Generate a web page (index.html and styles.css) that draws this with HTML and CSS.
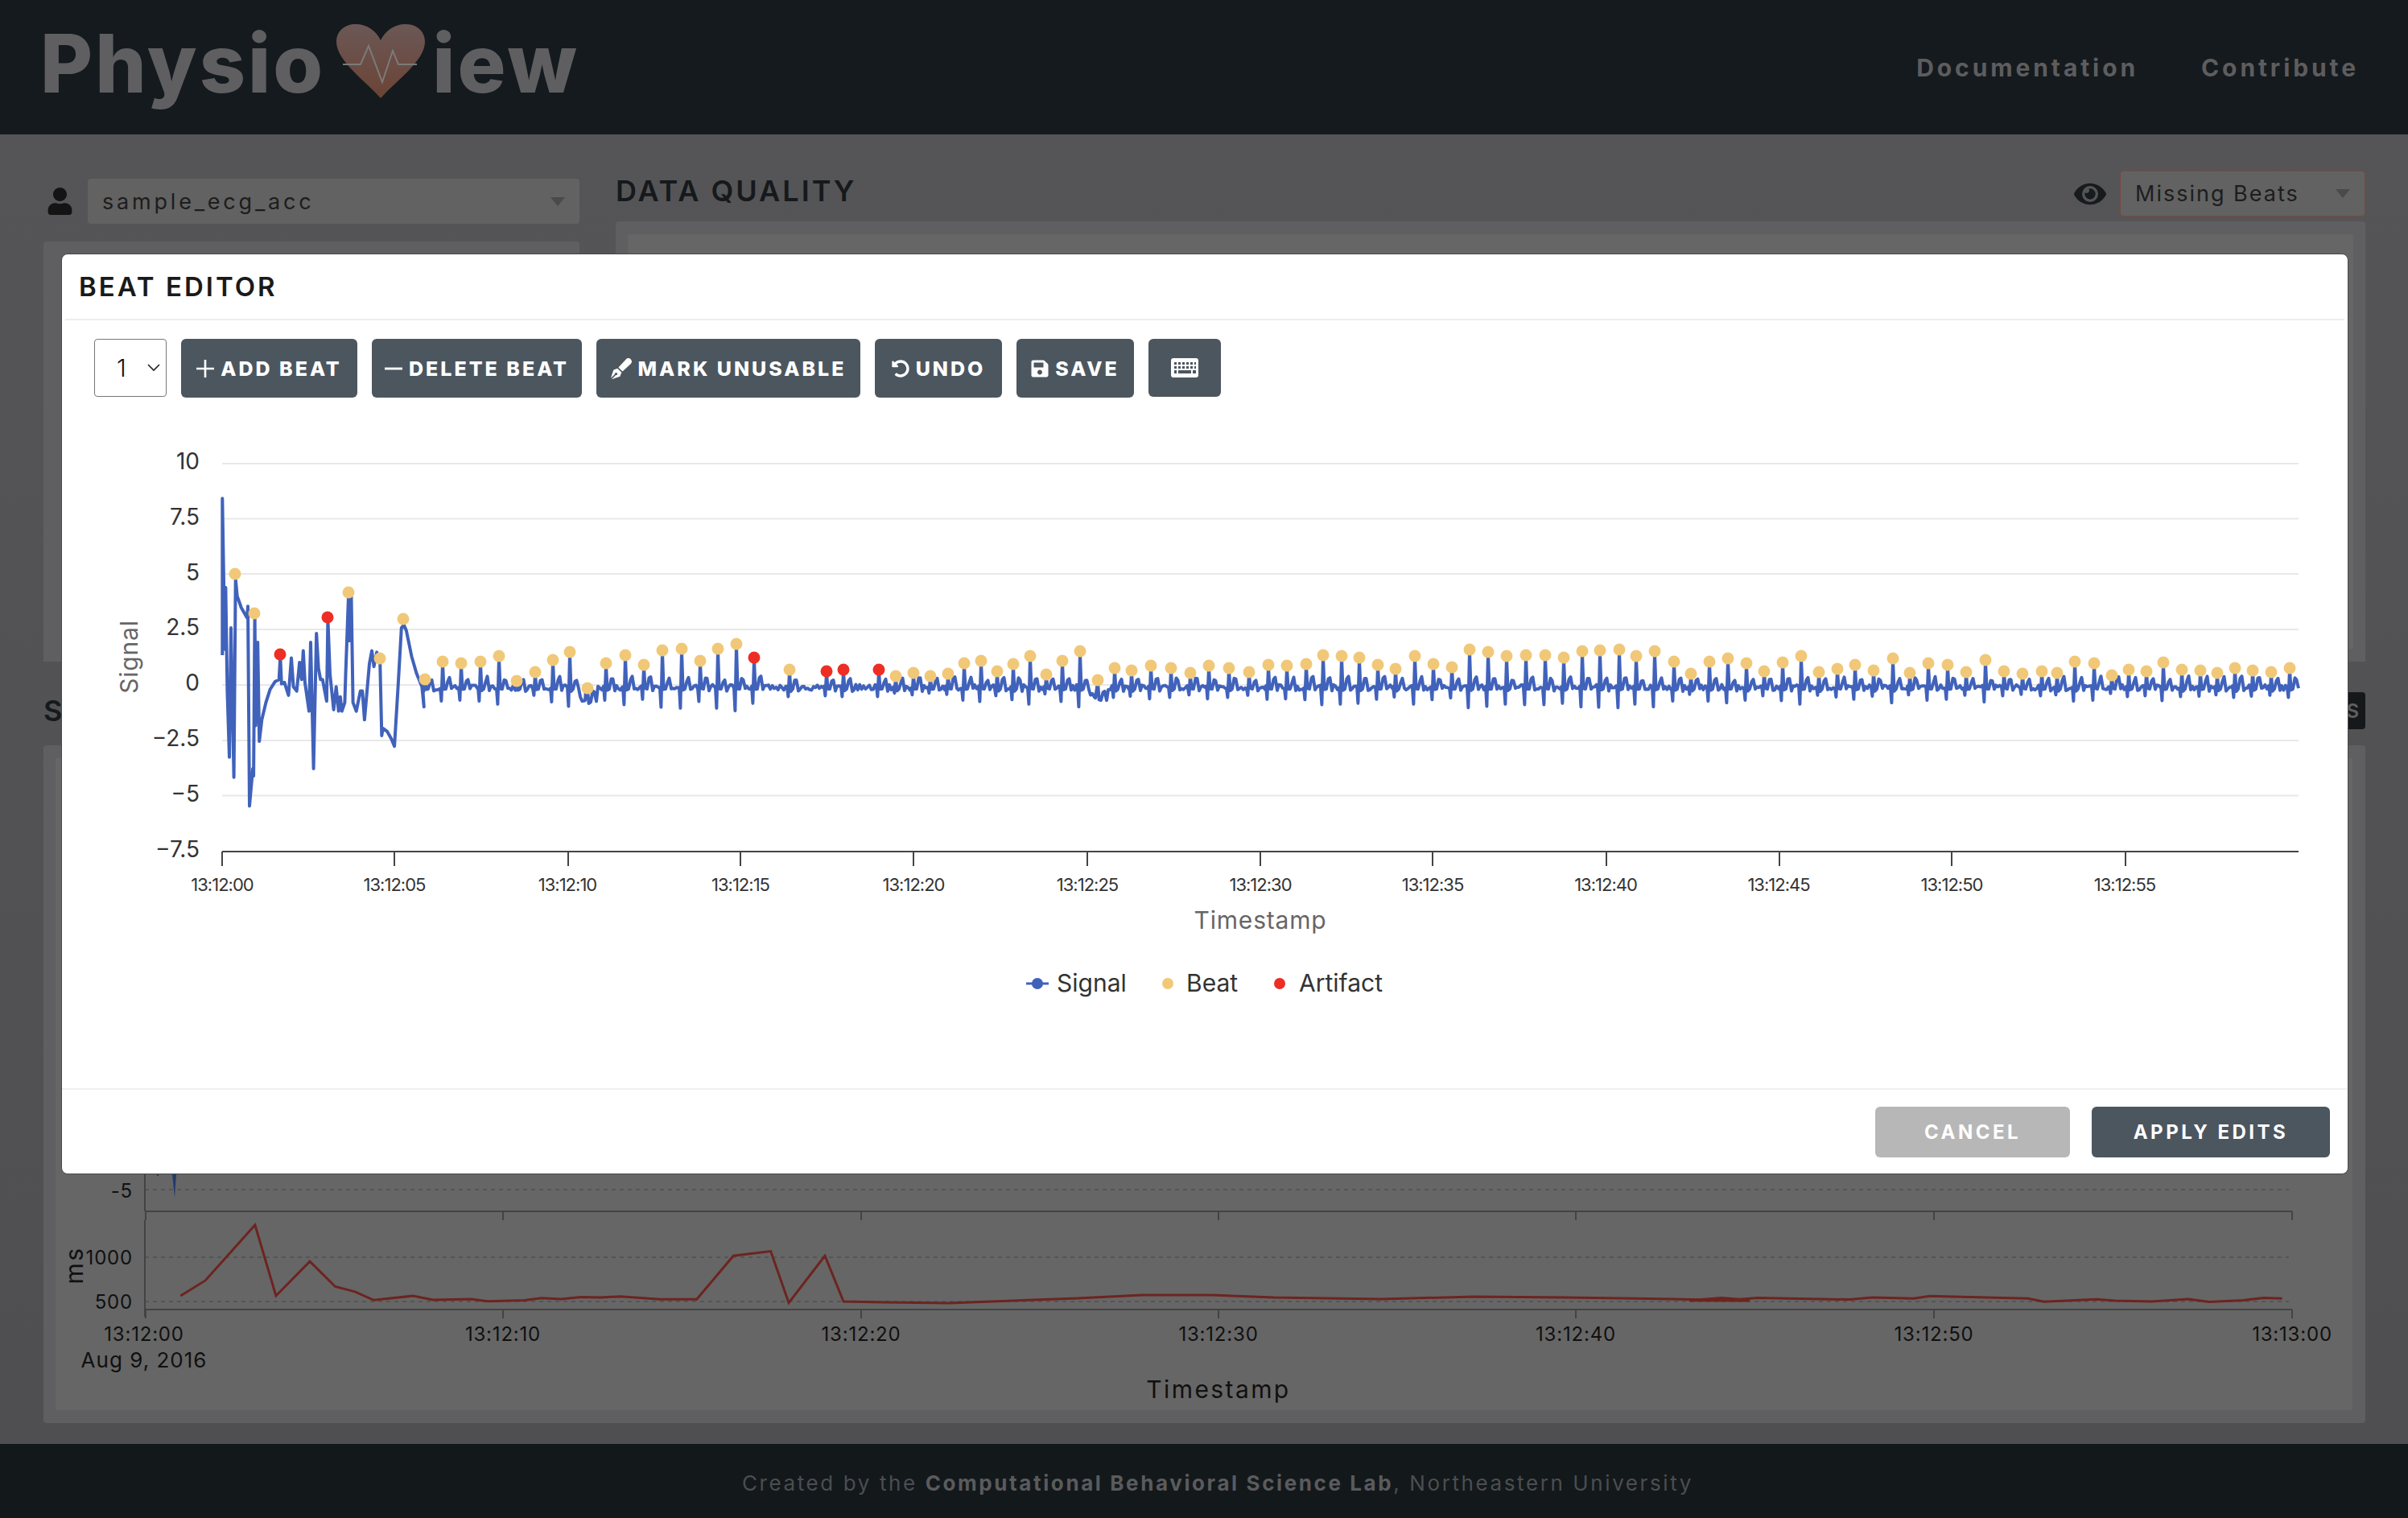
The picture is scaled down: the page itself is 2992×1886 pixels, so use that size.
FILE: index.html
```html
<!DOCTYPE html>
<html lang="en">
<head>
  <meta charset="UTF-8" />
  <title>PhysioView</title>
  <link rel="stylesheet" href="styles.css">
</head>
<body>
  <header class="topbar">
    <div class="logo">
      <span>Physio</span>
      <svg class="logo-heart" viewBox="0 0 110 92">
        <defs>
          <linearGradient id="heartFill" x1="0" y1="0" x2="0" y2="1">
            <stop offset="0" stop-color="#6b5856"/>
            <stop offset="1" stop-color="#6c4335"/>
          </linearGradient>
        </defs>
        <path d="M55 92C38 72 0 46 0 22 0 8 11 0 24 0c14 0 25 8 31 20C61 8 72 0 86 0c13 0 24 8 24 22 0 24-38 50-55 70z" fill="url(#heartFill)"/>
        <path d="M8 50h22l10-23 17 45 13-39 7 17h23" fill="none" stroke="#7b7b79" stroke-width="2"/>
      </svg>
      <span>iew</span>
    </div>
    <nav class="topnav">
      <a>Documentation</a>
      <a>Contribute</a>
    </nav>
  </header>

  <main class="content">
    <div class="top-row">
      <section class="side-col">
        <div class="subject-row">
          <svg class="user-icon" viewBox="0 0 448 512"><path d="M224 256c70.7 0 128-57.3 128-128S294.7 0 224 0 96 57.3 96 128s57.3 128 128 128zm89.6 32h-16.7c-22.2 10.2-46.9 16-72.9 16s-50.6-5.8-72.9-16h-16.7C60.2 288 0 348.2 0 422.4V464c0 26.5 21.5 48 48 48h352c26.5 0 48-21.5 48-48v-41.6c0-74.2-60.2-134.4-134.4-134.4z"/></svg>
          <div class="drop subject-drop">
            <span>sample_ecg_acc</span>
            <i class="drop-arrow"></i>
          </div>
        </div>
        <div class="card side-card"></div>
      </section>

      <section class="quality-col">
        <div class="quality-head">
          <h2 class="section-title">DATA QUALITY</h2>
          <svg class="eye-icon" viewBox="0 0 576 512"><path d="M572.52 241.4C518.29 135.59 410.93 64 288 64S57.68 135.64 3.48 241.41a32.35 32.35 0 0 0 0 29.19C57.71 376.41 165.07 448 288 448s230.32-71.64 284.52-177.41a32.35 32.35 0 0 0 0-29.19zM288 400a144 144 0 1 1 144-144 143.93 143.93 0 0 1-144 144zm0-240a95.31 95.31 0 0 0-25.31 3.79 47.85 47.85 0 0 1-66.9 66.9A95.78 95.78 0 1 0 288 160z"/></svg>
          <div class="drop metric-drop">
            <span>Missing Beats</span>
            <i class="drop-arrow"></i>
          </div>
        </div>
        <div class="card quality-card">
          <div class="card-inner"></div>
        </div>
      </section>
    </div>

    <div class="signal-head">
      <h2 class="section-title">SIGNAL</h2>
      <span class="dark-btn">BEATS</span>
    </div>

    <section class="card signal-card">
      <svg class="signal-plot" viewBox="70 942 2854 810">
        <path class="under-trace" d="M220 1459l-2 29-3-29z"/>
        <path class="under-tick" d="M197 1459v2"/>
        <g class="plot-grid">
          <path d="M181 1478H2845M181 1562H2845M181 1617H2845"/>
        </g>
        <g class="plot-axis">
          <path d="M181 1459V1505M181 1505H2849M181 1516V1636M181 1627H2849"/>
          <path d="M182 1505v11M626 1505v11M1071 1505v11M1515 1505v11M1959 1505v11M2404 1505v11M2849 1505v11"/>
          <path d="M182 1627v11M626 1627v11M1071 1627v11M1515 1627v11M1959 1627v11M2404 1627v11M2849 1627v11"/>
        </g>
        <polyline id="rrTrace" class="rr-trace" points=""/>
        <g class="plot-text">
          <text x="166" y="1488" text-anchor="end">-5</text>
          <text x="166" y="1571" text-anchor="end">1000</text>
          <text x="166" y="1626" text-anchor="end">500</text>
          <text x="180" y="1666" text-anchor="middle">13:12:00</text>
          <text x="626" y="1666" text-anchor="middle">13:12:10</text>
          <text x="1071" y="1666" text-anchor="middle">13:12:20</text>
          <text x="1515" y="1666" text-anchor="middle">13:12:30</text>
          <text x="1959" y="1666" text-anchor="middle">13:12:40</text>
          <text x="2404" y="1666" text-anchor="middle">13:12:50</text>
          <text x="2849" y="1666" text-anchor="middle">13:13:00</text>
          <text class="plot-date" x="180" y="1699" text-anchor="middle">Aug 9, 2016</text>
          <text class="plot-title" x="1515" y="1737" text-anchor="middle">Timestamp</text>
          <text class="plot-title" transform="translate(104 1572) rotate(-90)" text-anchor="middle">ms</text>
        </g>
      </svg>
    </section>
  </main>

  <footer class="bottombar">
    Created by the <b>Computational Behavioral Science Lab</b>, Northeastern University
  </footer>

  <div class="modal">
    <div class="modal-head">
      <h3>BEAT EDITOR</h3>
    </div>
    <div class="modal-body">
      <div class="toolbar">
        <div class="segment-select">
          <span>1</span>
          <svg viewBox="0 0 16 10"><path d="M1 1l7 7 7-7" fill="none" stroke="#222" stroke-width="1.6"/></svg>
        </div>
        <button class="btn btn-add">
          <svg viewBox="0 0 20 20"><path d="M10 0v20M0 10h20" stroke="#fff" stroke-width="2.4"/></svg>
          ADD BEAT
        </button>
        <button class="btn btn-delete">
          <svg viewBox="0 0 20 20"><path d="M0 10h20" stroke="#fff" stroke-width="2.6"/></svg>
          DELETE BEAT
        </button>
        <button class="btn btn-mark">
          <svg class="icon-pen" viewBox="0 0 512 512"><path fill="#fff" d="M79.18 282.94a32.005 32.005 0 0 0-20.24 20.24L0 480l4.69 4.69 92.89-92.89c-.66-2.56-1.57-5.03-1.57-7.8 0-17.67 14.33-32 32-32s32 14.33 32 32-14.33 32-32 32c-2.77 0-5.24-.91-7.8-1.57l-92.89 92.89L32 512l176.82-58.94a31.983 31.983 0 0 0 20.24-20.24l33.07-84.07-98.88-98.88-84.07 33.07zM369.25 28.32L186.14 227.81l97.85 97.85 199.49-183.11C568.4 67.48 443.73-55.94 369.25 28.32z"/></svg>
          MARK UNUSABLE
        </button>
        <button class="btn btn-undo">
          <svg viewBox="0 0 512 512"><path fill="#fff" d="M255.545 8c-66.269.119-126.438 26.233-170.86 68.685L48.971 40.971C33.851 25.851 8 36.559 8 57.941V192c0 13.255 10.745 24 24 24h134.059c21.382 0 32.09-25.851 16.971-40.971l-41.75-41.75c30.864-28.899 70.801-44.907 113.23-45.273 92.398-.798 170.283 73.977 169.484 169.442C423.236 348.009 349.816 424 256 424c-41.127 0-79.997-14.678-110.63-41.556-4.743-4.161-11.906-3.908-16.368.553L89.34 422.659c-4.872 4.872-4.631 12.815.482 17.433C133.798 479.813 192.074 504 256 504c136.966 0 247.999-111.033 248-247.998C504.001 119.193 392.354 7.755 255.545 8z"/></svg>
          UNDO
        </button>
        <button class="btn btn-save">
          <svg viewBox="0 0 448 512"><path fill="#fff" d="M433.941 129.941l-83.882-83.882A48 48 0 0 0 316.118 32H48C21.49 32 0 53.49 0 80v352c0 26.51 21.49 48 48 48h352c26.51 0 48-21.49 48-48V163.882a48 48 0 0 0-14.059-33.941zM224 416c-35.346 0-64-28.654-64-64 0-35.346 28.654-64 64-64s64 28.654 64 64c0 35.346-28.654 64-64 64zm96-304.52V212c0 6.627-5.373 12-12 12H76c-6.627 0-12-5.373-12-12V108c0-6.627 5.373-12 12-12h228.52c3.183 0 6.235 1.264 8.485 3.515l3.48 3.48A11.996 11.996 0 0 1 320 111.48z"/></svg>
          SAVE
        </button>
        <button class="btn btn-keys">
          <svg viewBox="0 0 34 24">
            <rect width="34" height="24" rx="3" fill="#fff"/>
            <path d="M4 5h3v3H4zM9 5h3v3H9zM14 5h3v3h-3zM19 5h3v3h-3zM24 5h3v3h-3zM29 5h2v3h-2zM4 10h3v3H4zM9 10h3v3H9zM14 10h3v3h-3zM19 10h3v3h-3zM24 10h3v3h-3zM29 10h2v3h-2zM4 15h3v4H4zM9 15h16v4H9zM27 15h4v4h-4z" fill="#4c565f"/>
          </svg>
        </button>
      </div>

      <svg class="beat-plot" viewBox="77 520 2840 760">
        <path class="grid" d="M276 576H2856M276 644.5H2856M276 713H2856M276 782H2856M276 851H2856M276 920H2856M276 988.5H2856"/>
        <path class="axis" d="M276 1058H2856M276 1058v18M490 1058v18M706 1058v18M920 1058v18M1135 1058v18M1351 1058v18M1566 1058v18M1780 1058v18M1996 1058v18M2211 1058v18M2425 1058v18M2641 1058v18"/>
        <polyline id="signalLine" class="signal-line" points=""/>
        <g id="beatDots"></g>
        <g class="y-labels" text-anchor="end">
          <text x="248" y="583">10</text>
          <text x="248" y="652">7.5</text>
          <text x="248" y="721">5</text>
          <text x="248" y="789">2.5</text>
          <text x="248" y="858">0</text>
          <text x="248" y="927">−2.5</text>
          <text x="248" y="996">−5</text>
          <text x="248" y="1065">−7.5</text>
        </g>
        <g class="x-labels" text-anchor="middle">
          <text x="276" y="1107">13:12:00</text>
          <text x="490" y="1107">13:12:05</text>
          <text x="705" y="1107">13:12:10</text>
          <text x="920" y="1107">13:12:15</text>
          <text x="1135" y="1107">13:12:20</text>
          <text x="1351" y="1107">13:12:25</text>
          <text x="1566" y="1107">13:12:30</text>
          <text x="1780" y="1107">13:12:35</text>
          <text x="1995" y="1107">13:12:40</text>
          <text x="2210" y="1107">13:12:45</text>
          <text x="2425" y="1107">13:12:50</text>
          <text x="2640" y="1107">13:12:55</text>
        </g>
        <text class="axis-title" x="1566" y="1154" text-anchor="middle">Timestamp</text>
        <text class="axis-title" transform="translate(171 816) rotate(-90)" text-anchor="middle">Signal</text>
        <g class="legend">
          <path d="M1275 1222h28" stroke="#4062bb" stroke-width="3"/>
          <circle cx="1289" cy="1222" r="7" fill="#4062bb"/>
          <text x="1313" y="1232">Signal</text>
          <circle cx="1451" cy="1222" r="7" fill="#f1c878"/>
          <text x="1474" y="1232">Beat</text>
          <circle cx="1590" cy="1222" r="7" fill="#ee2e24"/>
          <text x="1614" y="1232">Artifact</text>
        </g>
      </svg>
    </div>
    <div class="modal-foot">
      <button class="btn btn-cancel">CANCEL</button>
      <button class="btn btn-apply">APPLY EDITS</button>
    </div>
  </div>

  <script src="chart.js"></script>
</body>
</html>
```

FILE: styles.css
```css
* {
  box-sizing: border-box;
}

body {
  margin: 0;
  width: 2992px;
  height: 1886px;
  position: relative;
  overflow: hidden;
  display: flex;
  flex-direction: column;
  font-family: Inter, "Open Sans", sans-serif;
  background: #535355;
}

/* top bar */
.topbar {
  height: 167px;
  flex: none;
  display: flex;
  align-items: center;
  justify-content: space-between;
  padding: 0 61px 0 50px;
  background: #151a1e;
}

.logo {
  display: flex;
  align-items: center;
  padding-bottom: 10px;
  font-size: 100px;
  font-weight: 800;
  color: #5f5f61;
  letter-spacing: 3px;
}

.logo-heart {
  width: 110px;
  height: 92px;
  margin: 0 9px 5px 14px;
}

.topnav {
  display: flex;
  gap: 78px;
}

.topnav a {
  font-size: 30px;
  font-weight: 700;
  letter-spacing: 3.9px;
  color: #5d5d5f;
}

/* page under the dialog */
.content {
  flex: 1;
  display: flex;
  flex-direction: column;
  padding: 45px 53px 26px 54px;
  background: linear-gradient(#555557, #4f4f51);
}

.top-row {
  height: 610px;
  flex: none;
  display: grid;
  grid-template-columns: 666px 1fr;
  gap: 45px;
}

.side-col,
.quality-col {
  display: flex;
  flex-direction: column;
}

.subject-row {
  display: flex;
  align-items: center;
  margin: 10px 0 22px;
}

.user-icon {
  width: 31px;
  height: 34px;
  margin: 0 19px 0 5px;
  fill: #141414;
}

.drop {
  display: flex;
  align-items: center;
  justify-content: space-between;
  background: #626262;
  border-radius: 4px;
  color: #1d1d1d;
  font-size: 27px;
}

.subject-drop {
  flex: 1;
  height: 56px;
  padding: 0 18px;
  letter-spacing: 3.8px;
}

.metric-drop {
  width: 305px;
  height: 57px;
  padding: 0 18px;
  border: 1px solid #74493f;
  letter-spacing: 2px;
}

.drop-arrow {
  width: 0;
  height: 0;
  border-left: 9px solid transparent;
  border-right: 9px solid transparent;
  border-top: 11px solid #4a4a4a;
}

.section-title {
  margin: 0;
  font-size: 36px;
  font-weight: 600;
  letter-spacing: 3px;
  color: #16191c;
}

.quality-head {
  height: 57px;
  display: flex;
  align-items: center;
  margin-bottom: 6px;
}

.quality-head .section-title {
  flex: 1;
  margin-bottom: 8px;
}

.eye-icon {
  width: 40px;
  height: 36px;
  margin-right: 17px;
  fill: #171b1e;
}

.card {
  background: #5f5e60;
  border-radius: 4px;
}

.side-card {
  flex: 1;
  border-radius: 4px 4px 0 0;
}

.quality-card {
  flex: 1;
  display: flex;
  padding: 16px 15px 16px;
  border-radius: 4px 4px 0 0;
}

.card-inner {
  flex: 1;
  background: #666;
}

.signal-head {
  height: 104px;
  flex: none;
  display: flex;
  align-items: center;
  justify-content: space-between;
  padding-top: 18px;
}

.dark-btn {
  height: 46px;
  padding: 0 8px;
  display: flex;
  align-items: center;
  background: #16191b;
  border-radius: 4px;
  color: #5f5f61;
  font-size: 24px;
  font-weight: 600;
}

.signal-card {
  flex: 1;
  padding: 16px 15px;
  display: flex;
}

.signal-plot {
  width: 2854px;
  height: 810px;
  display: block;
  background: #666;
}

.under-trace {
  fill: #243a6e;
}

.under-tick {
  stroke: #243a6e;
  stroke-width: 2;
}

.plot-grid path {
  fill: none;
  stroke: #555;
  stroke-width: 2;
  stroke-dasharray: 5 5;
}

.plot-axis path {
  fill: none;
  stroke: #434343;
  stroke-width: 2;
}

.rr-trace {
  fill: none;
  stroke: #6d2420;
  stroke-width: 3;
}

.plot-text text {
  font-size: 24px;
  fill: #101010;
  letter-spacing: 0.8px;
}

.plot-text .plot-date {
  font-size: 26px;
  letter-spacing: 1px;
}

.plot-text .plot-title {
  font-size: 30px;
  letter-spacing: 2.4px;
}

.bottombar {
  height: 92px;
  flex: none;
  padding: 3px 0 0 34px;
  line-height: 92px;
  text-align: center;
  background: #13181b;
  color: #4b4e51;
  font-size: 26px;
  letter-spacing: 2.6px;
}

.bottombar b {
  font-weight: 700;
  color: #5a5b5d;
}

/* beat editor dialog */
.modal {
  position: absolute;
  left: 76px;
  top: 315px;
  width: 2842px;
  height: 1144px;
  display: flex;
  flex-direction: column;
  background: #fff;
  border: 1px solid #484848;
  border-radius: 8px;
}

.modal-head {
  height: 82px;
  flex: none;
  display: flex;
  align-items: center;
  margin: 0 4px;
  padding: 0 17px;
  border-bottom: 2px solid #eeeeee;
}

.modal-head h3 {
  margin: 0;
  font-size: 33px;
  font-weight: 600;
  letter-spacing: 3px;
  color: #1a1a1a;
}

.modal-body {
  flex: 1;
}

.toolbar {
  display: flex;
  gap: 18px;
  margin-top: 23px;
  padding-left: 40px;
}

.segment-select {
  width: 90px;
  height: 72px;
  display: flex;
  align-items: center;
  justify-content: space-between;
  padding: 0 7px 0 27px;
  border: 1px solid #777;
  border-radius: 4px;
  font-size: 30px;
  font-weight: 300;
  color: #111;
}

.segment-select svg {
  width: 16px;
  height: 10px;
}

.btn {
  height: 73px;
  display: flex;
  align-items: center;
  justify-content: center;
  gap: 8px;
  padding: 0;
  border: 0;
  border-radius: 6px;
  background: #4c565f;
  color: #fff;
  font-family: inherit;
  font-size: 25px;
  font-weight: 800;
  letter-spacing: 3px;
}

.btn svg {
  width: 22px;
  height: 24px;
  flex: none;
}

.btn .icon-pen {
  width: 26px;
  height: 26px;
}

.btn-add { width: 219px; }
.btn-delete { width: 261px; }
.btn-mark { width: 328px; }
.btn-undo { width: 158px; }
.btn-save { width: 146px; }

.btn-keys {
  width: 90px;
  height: 72px;
}

.btn-keys svg {
  width: 34px;
  height: 24px;
}

.beat-plot {
  width: 2840px;
  height: 760px;
  display: block;
  margin-top: 26px;
}

.grid {
  fill: none;
  stroke: #e8e8e8;
  stroke-width: 2;
}

.axis {
  fill: none;
  stroke: #444;
  stroke-width: 2;
}

.signal-line {
  fill: none;
  stroke: #4062bb;
  stroke-width: 4;
  stroke-linejoin: round;
}

.y-labels text {
  font-size: 28px;
  fill: #333;
}

.x-labels text {
  font-size: 22px;
  fill: #333;
  letter-spacing: -1px;
}

.axis-title {
  font-size: 30px;
  fill: #666;
  letter-spacing: 0.8px;
}

.legend text {
  font-size: 30px;
  fill: #333;
}

.modal-foot {
  height: 106px;
  flex: none;
  display: flex;
  justify-content: flex-end;
  gap: 27px;
  padding: 21px 22px 0 0;
  border-top: 2px solid #f0f0f0;
}

.btn-cancel {
  width: 242px;
  height: 63px;
  background: #b7b7b7;
}

.btn-apply {
  width: 296px;
  height: 63px;
}

.modal-foot .btn {
  font-size: 24px;
  letter-spacing: 3.5px;
  font-weight: 700;
}
```

FILE: chart.js
```js
// peaks in page pixels, read off the recording
const beats = [
  [292,713],[316,762],[433,736],[472,818],[501,769],[528,844],[550,822],[573,824],[597,822],[620,815],
  [642,846],[665,835],[687,820],[708,810],[730,855],[753,824],[777,814],[800,826],[823,808],[847,806],
  [870,821],[892,806],[915,800],[981,832],[1113,840],[1135,836],[1156,840],[1178,837],[1198,824],[1219,821],
  [1239,834],[1259,825],[1280,815],[1300,838],[1320,821],[1342,809],[1364,845],[1385,830],[1406,833],[1430,827],
  [1455,830],[1479,836],[1502,827],[1527,830],[1552,835],[1576,826],[1599,827],[1623,825],[1644,814],[1667,815],
  [1689,817],[1712,826],[1734,831],[1758,815],[1781,825],[1804,829],[1826,807],[1849,810],[1872,815],[1896,814],
  [1920,814],[1943,817],[1966,809],[1988,808],[2012,807],[2033,815],[2056,809],[2080,822],[2101,837],[2124,822],
  [2147,818],[2170,824],[2192,834],[2215,823],[2238,815],[2260,835],[2283,831],[2305,826],[2328,833],[2352,818],
  [2373,836],[2396,824],[2420,826],[2443,835],[2467,820],[2490,834],[2513,837],[2537,834],[2556,836],[2578,822],
  [2602,824],[2624,839],[2645,832],[2667,834],[2688,823],[2711,832],[2734,833],[2755,836],[2777,830],[2799,833],
  [2822,835],[2845,830]
];
const artifacts = [[348,813],[407,767],[937,817],[1027,834],[1048,832],[1092,832]];

// the unsettled first seconds of the recording, by hand
const start = [
  [424,795],[424,250],[430,775],[432,560],[436,920],[441,1150],[445,700],[452,1220],[456,530],[460,590],
  [470,630],[484,665],[486,625],[490,1320],[498,1190],[500,1215],[503,650],[505,1040],[510,750],[514,1095],
  [520,1020],[530,960],[540,915],[552,888],[562,880],[565,800],[568,895],[575,890],[585,935],[592,805],
  [597,905],[605,920],[612,820],[617,880],[621,780],[625,890],[635,990],[639,750],[646,1190],[653,720],
  [658,840],[663,880],[668,880],[678,955],[681,670],[686,860],[695,985],[701,905],[707,990],[711,940],
  [715,990],[722,960],[724,870],[731,590],[733,745],[738,590],[742,960],[750,990],[760,920],[765,920],
  [770,1020],[782,825],[788,780],[793,835],[800,785],[808,820],[812,1075],[815,1050],[825,1060],[835,1085],
  [843,1112],[852,900],[860,700],[866,690],[872,710],[885,800],[897,860],[910,905],[915,975]
].map(([x, y]) => [60 + x / 1.96, 530 + y / 2.8]);

let seed = 41;
function noise(size) {
  seed = (seed * 16807) % 2147483647;
  return (seed / 2147483647 - 0.5) * 2 * size;
}

// baseline wanders in two places
function baseline(x) {
  const dip = (at, depth, width) => depth * Math.exp(-((x - at) * (x - at)) / (width * width));
  return 854 + dip(727, 18, 9) + dip(1364, 14, 10);
}

function heartbeat(points, x, y, nextX) {
  const base = baseline(x);
  const depth = 851 + (851 - y) * 0.55 + 4;
  points.push([x - 3, base + noise(2)], [x - 1.6, depth], [x, y + 2], [x + 1.6, base + 3 + noise(2)]);
  points.push([x + 4, base + 2], [x + 6.5, base - 9 + noise(3)], [x + 8.5, base - 11 + noise(3)], [x + 11, base + 3 + noise(2)]);
  for (let px = x + 13; px < nextX - 3; px += 2.4) {
    points.push([px, baseline(px) + noise(3.5)]);
  }
}

// settled part of the trace, artifacts beat like the rest
const steady = beats.concat(artifacts).filter(b => b[0] >= 528).sort((a, b) => a[0] - b[0]);
const points = start.slice();
steady.forEach((b, i) => {
  const next = steady[i + 1] ? steady[i + 1][0] : 2860;
  heartbeat(points, b[0], b[1], next);
});

const inRange = points.filter(p => p[0] <= 2856);
document.getElementById("signalLine").setAttribute("points", inRange.map(p => p[0].toFixed(1) + "," + p[1].toFixed(1)).join(" "));

const dots = document.getElementById("beatDots");
function addDot(p, color) {
  const c = document.createElementNS("http://www.w3.org/2000/svg", "circle");
  c.setAttribute("cx", p[0]);
  c.setAttribute("cy", p[1]);
  c.setAttribute("r", 7.5);
  c.setAttribute("fill", color);
  dots.appendChild(c);
}
beats.forEach(b => addDot(b, "#f1c878"));
artifacts.forEach(a => addDot(a, "#ee2e24"));

// RR interval trace on the page under the dialog
const rrLeft = [
  [321,775],[365,720],[453,522],[490,775],[550,652],[595,742],[630,760],[663,790],[733,775],[768,789],
  [835,786],[865,794],[930,791],[960,783],[995,786],[1030,779],[1065,781],[1100,777],[1170,787],[1235,787],
  [1300,632],[1366,616],[1398,800],[1462,632],[1495,795],[1568,798]
].map(([x, y]) => [x / 1.425, 1340 + y / 2.87]);
const rrMiddle = [
  [1180,1619],[1260,1616],[1340,1613],[1420,1609],[1507,1609],[1584,1612],[1717,1614],[1832,1611],[1946,1612],[2080,1614],[2175,1616]
];
const rrRight = [
  [0,845],[70,836],[110,841],[150,836],[350,842],[400,835],[490,838],[525,830],[740,838],[775,849],
  [890,841],[930,846],[1010,848],[1090,840],[1135,850],[1210,844],[1255,836],[1295,838]
].map(([x, y]) => [2100 + x / 1.758, 1300 + y / 2.676]);
const rr = rrLeft.concat(rrMiddle, rrRight);
document.getElementById("rrTrace").setAttribute("points", rr.map(p => p[0].toFixed(1) + "," + p[1].toFixed(1)).join(" "));
```
